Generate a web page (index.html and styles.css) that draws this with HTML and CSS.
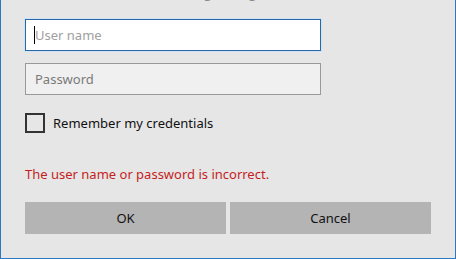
FILE: index.html
```html
<!DOCTYPE html>
<html>
<head>
<meta charset="utf-8">
<link rel="stylesheet" href="styles.css">
</head>
<body>
<div class="dialog">
  <div class="title"><span class="title-main">Enter your</span> <span class="title-sub">credentials to sign in again</span></div>
  <div class="field-wrap">
    <input class="field focused" type="text" placeholder="User name">
    <span class="caret"></span>
  </div>
  <input class="field idle" type="password" placeholder="Password">
  <label class="remember">
    <span class="box"></span>
    <span class="remember-text">Remember my credentials</span>
  </label>
  <div class="error">The user name or password is incorrect.</div>
  <div class="buttons">
    <button class="btn">OK</button>
    <button class="btn">Cancel</button>
  </div>
</div>
</body>
</html>
```

FILE: styles.css
```css
html, body {
  margin: 0;
  padding: 0;
  background: #e6e6e6;
}
body {
  width: 456px;
  height: 259px;
  overflow: hidden;
  font-family: "Noto Sans", "Open Sans", sans-serif;
}
.dialog {
  box-sizing: border-box;
  width: 456px;
  height: 259px;
  border: 1px solid #2b78c4;
  border-top: none;
  background: #e6e6e6;
  padding: 0 24px 0 24px;
  display: flex;
  flex-direction: column;
  overflow: hidden;
}
.title {
  margin-top: -17px;
  height: 18px;
  font-size: 14px;
  line-height: 18px;
  white-space: nowrap;
}
.title-main { color: #000; font-weight: 600; }
.title-sub { color: #8a8a8a; }
.field-wrap {
  position: relative;
  margin-top: 18px;
  width: 296px;
  height: 32px;
  flex: none;
}
.field {
  box-sizing: border-box;
  width: 296px;
  height: 32px;
  margin: 0;
  padding: 0 0 0 9px;
  font-family: "Noto Sans", "Open Sans", sans-serif;
  font-size: 13px;
  outline: none;
  flex: none;
}
.field.focused {
  border: 1px solid #2a69a5;
  background: #fff;
  box-shadow: 0 0 0 1px #cfe3f4;
}
.field.focused::placeholder { color: #a0a0a0; }
.caret {
  position: absolute;
  left: 9px;
  top: 7px;
  width: 1px;
  height: 18px;
  background: #000;
}
.field.idle {
  margin-top: 12px;
  border: 1px solid #999;
  background: #f0f0f0;
}
.field.idle::placeholder { color: #7a7a7a; }
.remember {
  margin-top: 18px;
  display: flex;
  align-items: center;
  height: 20px;
}
.box {
  box-sizing: border-box;
  width: 20px;
  height: 20px;
  border: 2px solid #333;
  flex: none;
}
.remember-text {
  margin-left: 8px;
  font-size: 13px;
  color: #111;
}
.error {
  margin-top: 31px;
  height: 20px;
  line-height: 20px;
  font-size: 13px;
  color: #c41e1e;
}
.buttons {
  margin-top: 18px;
  display: flex;
  gap: 4px;
}
.btn {
  width: 201px;
  height: 32px;
  border: none;
  margin: 0;
  background: #b4b4b4;
  font-family: "Noto Sans", "Open Sans", sans-serif;
  font-size: 13px;
  color: #111;
}
```
